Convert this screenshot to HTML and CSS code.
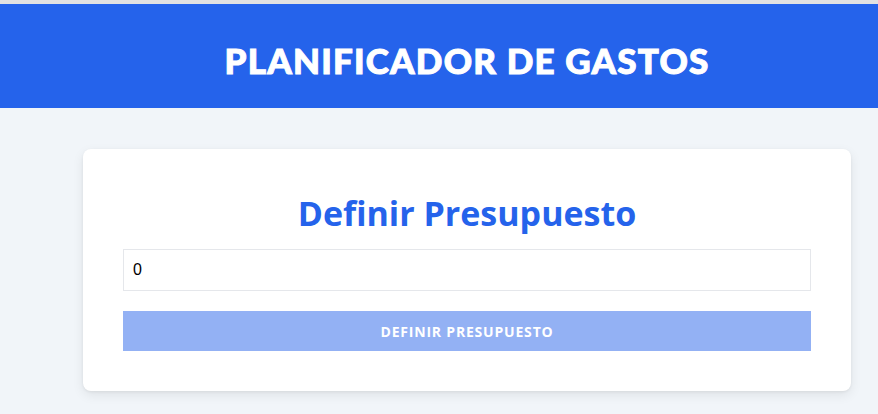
FILE: index.html
```html
<!DOCTYPE html>
<html lang="es">
<head>
<meta charset="utf-8">
<title>Planificador de Gastos</title>
<link rel="stylesheet" href="styles.css">
</head>
<body>
<div class="topline"></div>
<header class="header">
  <h1 class="header-title">PLANIFICADOR DE GASTOS</h1>
</header>
<main class="main">
  <section class="card">
    <h2 class="card-title">Definir Presupuesto</h2>
    <form class="form">
      <input class="input" type="number" value="0">
      <button class="button" type="button">DEFINIR PRESUPUESTO</button>
    </form>
  </section>
</main>
</body>
</html>
```
FILE: styles.css
```css
* { box-sizing: border-box; }
html, body { margin: 0; padding: 0; }
body {
  background: #f1f5f9;
  font-family: "Open Sans", "Noto Sans", sans-serif;
  height: 414px;
  overflow: hidden;
}
.topline {
  height: 4px;
  background: #e2e2e2;
}
.header {
  background: #2563eb;
  height: 104px;
  display: flex;
  align-items: center;
  justify-content: center;
  padding: 7px 0 0 56px;
}
.header-title {
  margin: 0;
  color: #fff;
  font-family: "Lato", sans-serif;
  font-weight: 900;
  font-size: 35px;
  letter-spacing: 1.2px;
  -webkit-text-stroke: 1px #fff;
}
.main {
  padding: 41px 0 0 56px;
  display: flex;
  justify-content: center;
}
.card {
  width: 768px;
  background: #fff;
  border-radius: 8px;
  box-shadow: 0 4px 12px rgba(0,0,0,0.08), 0 1px 3px rgba(0,0,0,0.06);
  padding: 40px 40px 40px;
}
.card-title {
  margin: 0 0 12px;
  text-align: center;
  color: #2563eb;
  font-weight: 700;
  font-size: 34px;
  line-height: 48px;
}
.form {
  display: flex;
  flex-direction: column;
  gap: 20px;
}
.input {
  height: 42px;
  border: 1px solid #e5e7eb;
  padding: 0 9px;
  font-family: "Liberation Sans", Arial, sans-serif;
  font-size: 16px;
  color: #000;
  outline: none;
  -moz-appearance: textfield;
}
.input::-webkit-inner-spin-button { -webkit-appearance: none; }
.button {
  height: 40px;
  border: none;
  background: #93b1f4;
  color: #fff;
  font-family: "Open Sans", sans-serif;
  font-weight: 700;
  font-size: 14px;
  letter-spacing: 0.8px;
}
```
